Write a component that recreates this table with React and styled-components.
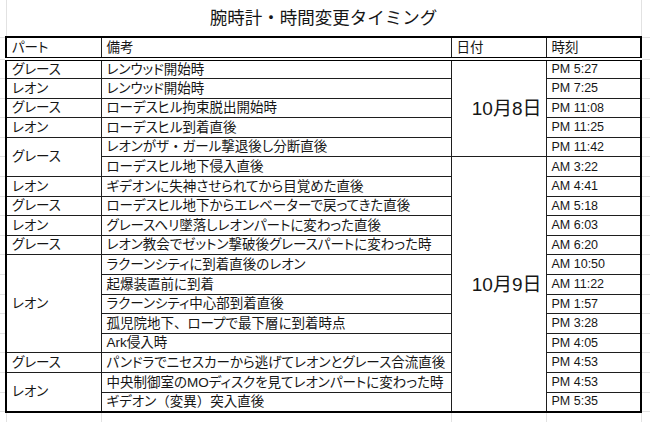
import React from 'react';
import styled, { createGlobalStyle } from 'styled-components';

const GRID = '#e2e2e2';
const LINE = '#1e1e1e';
const OUTER = '2px solid #000';

const GlobalStyle = createGlobalStyle`
  html, body {
    margin: 0;
    padding: 0;
    background: #ffffff;
  }
  body {
    font-family: "Liberation Sans", "Noto Sans CJK JP", sans-serif;
    color: #161616;
  }
`;

const Sheet = styled.table`
  width: 650px;
  table-layout: fixed;
  border-collapse: collapse;
  font-feature-settings: "palt";
`;

const TitleRow = styled.tr`
  height: 37px;
`;

const HeadRow = styled.tr`
  height: 22px;
`;

const BodyRow = styled.tr`
  height: 19.6px;
`;

const FillRow = styled.tr`
  height: 10px;
`;

const Gutter = styled.td`
  padding: 0;
  border-bottom: 1px solid ${GRID};
`;

const Title = styled.td`
  padding: 0 0 3px;
  text-align: center;
  font-family: "Noto Sans CJK JP", sans-serif;
  font-feature-settings: normal;
  font-size: 17.5px;
  border-left: 1px solid ${GRID};
  border-right: 1px solid ${GRID};
  border-bottom: ${OUTER};
`;

const sizes = { big: '19px', time: '12.5px', text: '13.5px' };

const Cell = styled.td`
  padding: ${(p) => (p.$align === 'right' ? '0 4px 0 0' : '0 0 0 5px')};
  border: 1px solid ${LINE};
  ${(p) => p.$first && `border-left: ${OUTER};`}
  ${(p) => p.$last && `border-right: ${OUTER};`}
  ${(p) => p.$top && `border-top: ${OUTER};`}
  ${(p) => p.$head && 'border-bottom: 4px double #000;'}
  ${(p) => p.$end && `border-bottom: ${OUTER};`}
  text-align: ${(p) => p.$align || 'left'};
  font-size: ${(p) => sizes[p.$size || 'text']};
  vertical-align: middle;
  white-space: nowrap;
  overflow: hidden;
  line-height: 1;
`;

// full-width punctuation keeps its full em box, as in the sheet
const Punct = styled.span`
  font-feature-settings: normal;
`;

const FillCell = styled.td`
  padding: 0;
  border-right: 1px solid ${GRID};
`;

const Note = ({ text }) =>
  text.split(/([、・（）])/).map((part, i) =>
    i % 2 ? <Punct key={i}>{part}</Punct> : part,
  );

// part/date: span count on the first row of a merge, null where covered
const rows = [
  { part: ['グレース', 1], note: 'レンウッド開始時', date: ['10月8日', 5], time: 'PM 5:27' },
  { part: ['レオン', 1], note: 'レンウッド開始時', date: null, time: 'PM 7:25' },
  { part: ['グレース', 1], note: 'ローデスヒル拘束脱出開始時', date: null, time: 'PM 11:08' },
  { part: ['レオン', 1], note: 'ローデスヒル到着直後', date: null, time: 'PM 11:25' },
  { part: ['グレース', 2], note: 'レオンがザ・ガール撃退後し分断直後', date: null, time: 'PM 11:42' },
  { part: null, note: 'ローデスヒル地下侵入直後', date: ['10月9日', 13], time: 'AM 3:22' },
  { part: ['レオン', 1], note: 'ギデオンに失神させられてから目覚めた直後', date: null, time: 'AM 4:41' },
  { part: ['グレース', 1], note: 'ローデスヒル地下からエレベーターで戻ってきた直後', date: null, time: 'AM 5:18' },
  { part: ['レオン', 1], note: 'グレースヘリ墜落しレオンパートに変わった直後', date: null, time: 'AM 6:03' },
  { part: ['グレース', 1], note: 'レオン教会でゼットン撃破後グレースパートに変わった時', date: null, time: 'AM 6:20' },
  { part: ['レオン', 5], note: 'ラクーンシティに到着直後のレオン', date: null, time: 'AM 10:50' },
  { part: null, note: '起爆装置前に到着', date: null, time: 'AM 11:22' },
  { part: null, note: 'ラクーンシティ中心部到着直後', date: null, time: 'PM 1:57' },
  { part: null, note: '孤児院地下、ロープで最下層に到着時点', date: null, time: 'PM 3:28' },
  { part: null, note: 'Ark侵入時', date: null, time: 'PM 4:05' },
  { part: ['グレース', 1], note: 'パンドラでニセスカーから逃げてレオンとグレース合流直後', date: null, time: 'PM 4:53' },
  { part: ['レオン', 2], note: '中央制御室のMOディスクを見てレオンパートに変わった時', date: null, time: 'PM 4:53' },
  { part: null, note: 'ギデオン（変異）突入直後', date: null, time: 'PM 5:35' },
];

const heads = ['パート', '備考', '日付', '時刻'];

const App = () => {
  const last = rows.length;

  return (
    <>
      <GlobalStyle />
      <Sheet>
        <colgroup>
          <col style={{ width: 6 }} />
          <col style={{ width: 95 }} />
          <col style={{ width: 350 }} />
          <col style={{ width: 95 }} />
          <col style={{ width: 95 }} />
          <col style={{ width: 9 }} />
        </colgroup>
        <tbody>
          <TitleRow>
            <Gutter />
            <Title colSpan={4}>腕時計・時間変更タイミング</Title>
            <Gutter />
          </TitleRow>

          <HeadRow>
            <Gutter />
            {heads.map((h, i) => (
              <Cell key={h} $top $head $first={i === 0} $last={i === 3}>
                {h}
              </Cell>
            ))}
            <Gutter />
          </HeadRow>

          {rows.map((r, i) => (
            <BodyRow key={i}>
              <Gutter />
              {r.part && (
                <Cell rowSpan={r.part[1]} $first $end={i + r.part[1] === last}>
                  {r.part[0]}
                </Cell>
              )}
              <Cell $end={i + 1 === last}>
                <Note text={r.note} />
              </Cell>
              {r.date && (
                <Cell rowSpan={r.date[1]} $align="right" $size="big" $end={i + r.date[1] === last}>
                  {r.date[0]}
                </Cell>
              )}
              <Cell $last $size="time" $end={i + 1 === last}>
                {r.time}
              </Cell>
              <Gutter />
            </BodyRow>
          ))}

          <FillRow>
            <FillCell />
            <FillCell />
            <FillCell />
            <FillCell />
            <FillCell />
            <td />
          </FillRow>
        </tbody>
      </Sheet>
    </>
  );
};

export default App;
